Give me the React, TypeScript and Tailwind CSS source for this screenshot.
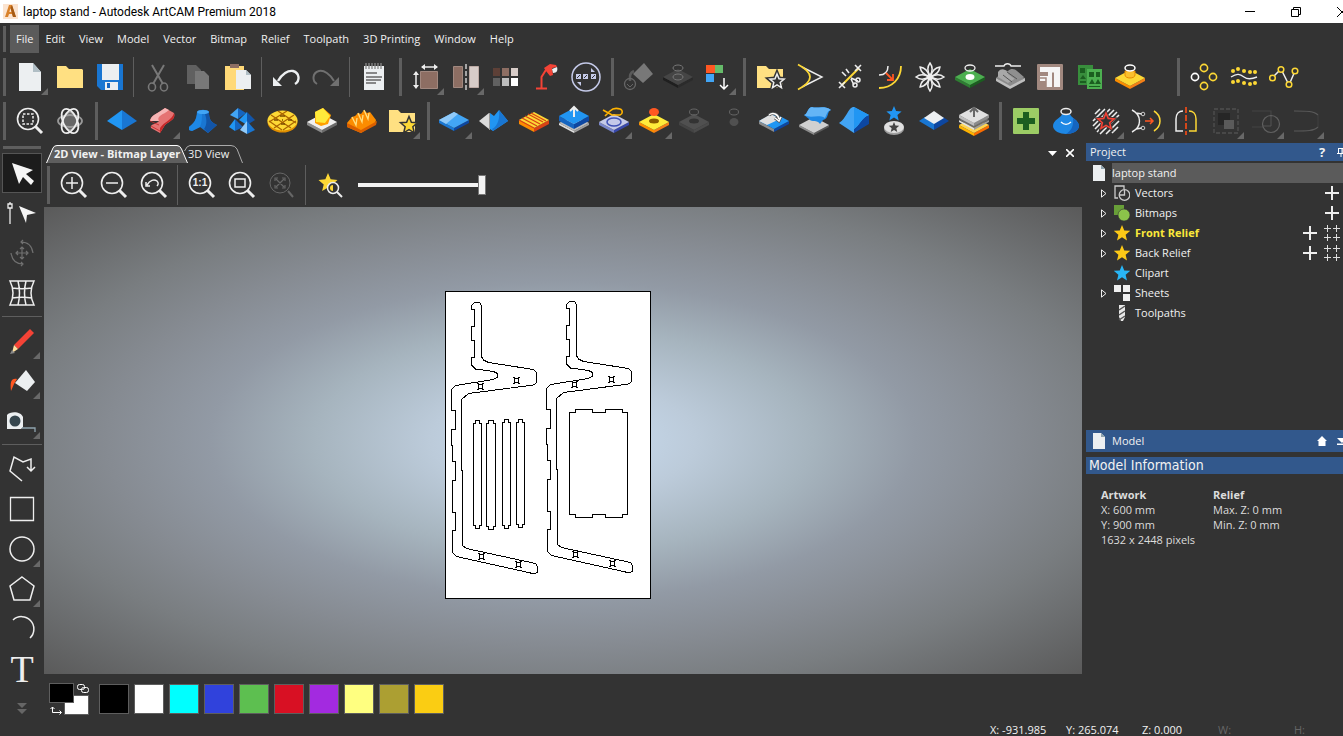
import { ReactNode } from "react";

type Tool = {
	name: string;
	art: ReactNode;
	menu?: boolean;
	active?: boolean;
};

type SlabProps = {
	top: string;
	left: string;
	right: string;
	y?: number;
	depth?: number;
};

type StarProps = {
	x: number;
	y: number;
	r: number;
	fill: string;
	stroke?: string;
	strokeWidth?: number;
};

const Svg = ({ children }: { children: ReactNode }) => (
	<svg className="size-10" viewBox="0 0 40 40" fill="none" aria-hidden="true">
		{children}
	</svg>
);

// isometric plate used by most of the relief icons
const Slab = ({ top, left, right, y = 20, depth = 3 }: SlabProps) => (
	<g>
		<path d={`M5 ${y}l15 8v${depth}l-15 -8z`} fill={left} />
		<path d={`M35 ${y}l-15 8v${depth}l15 -8z`} fill={right} />
		<path d={`M5 ${y}L20 ${y - 8}L35 ${y}L20 ${y + 8}z`} fill={top} />
	</g>
);

const Star = ({ x, y, r, ...rest }: StarProps) => {
	const points = Array.from({ length: 10 }, (_, i) => {
		const radius = i % 2 === 0 ? r : r * 0.45;
		const angle = (Math.PI / 5) * i - Math.PI / 2;
		return `${(x + radius * Math.cos(angle)).toFixed(2)},${(y + radius * Math.sin(angle)).toFixed(2)}`;
	});
	return <polygon points={points.join(" ")} {...rest} />;
};

const Lens = ({ children }: { children: ReactNode }) => (
	<g stroke="#eeeeee">
		<circle cx="18" cy="18" r="10.5" strokeWidth="1.6" />
		<path d="M25.5 25.5L32 32" strokeWidth="3" />
		{children}
	</g>
);

const Handle = ({ first = false }: { first?: boolean }) => (
	<div className={first ? "ml-[3px] mr-1 h-[38px] w-[3px] shrink-0 bg-[#5e5e5e]" : "ml-[5px] mr-1 h-[38px] w-[3px] shrink-0 bg-[#5e5e5e]"} />
);

const Divider = () => <div className="ml-[3px] mr-1 h-10 w-px shrink-0 bg-[#5e5e5e]" />;

const ToolButton = ({ tool }: { tool: Tool }) => (
	<button
		type="button"
		title={tool.name}
		aria-label={tool.name}
		className={tool.active ? "size-10 shrink-0 bg-[#1c1c1c] outline outline-1 -outline-offset-1 outline-[#555555]" : "size-10 shrink-0"}
	>
		<Svg>
			{tool.art}
			{tool.menu && <path d="M38 31v7h-7z" fill="#686868" />}
		</Svg>
	</button>
);

const Tools = ({ tools }: { tools: Tool[] }) => (
	<>
		{tools.map((tool) => (
			<ToolButton key={tool.name} tool={tool} />
		))}
	</>
);

const fileTools: Tool[] = [
	{
		name: "New model",
		menu: true,
		art: (
			<>
				<path d="M9 6h14l8 9v19H9z" fill="#eceff1" />
				<path d="M23 6l8 9h-8z" fill="#b0bec5" />
			</>
		),
	},
	{ name: "Open", art: <path d="M7 9h9l3 3h13l1 1v18H7z" fill="#ffe082" /> },
	{
		name: "Save",
		art: (
			<>
				<path d="M7 7h26v26H11l-4-4z" fill="#1976d2" />
				<path d="M12 7h17v16H12zM15 25h13v8H15z" fill="#eceff1" />
				<path d="M17 26h3v5h-3z" fill="#1565c0" />
			</>
		),
	},
];

const editTools: Tool[] = [
	{
		name: "Cut",
		art: (
			<g stroke="#787878" strokeWidth="1.6">
				<path d="M14 8l11 19M26 8L15 27" strokeWidth="2" />
				<ellipse cx="14" cy="30" rx="3.5" ry="4" />
				<ellipse cx="26" cy="30" rx="3.5" ry="4" />
			</g>
		),
	},
	{
		name: "Copy",
		art: (
			<>
				<path d="M9 8h9l5 5v14H9z" fill="#606060" />
				<path d="M17 14h9l5 5v13H17z" fill="#787878" />
			</>
		),
	},
	{
		name: "Paste",
		art: (
			<>
				<path d="M7 9h19v24H7z" fill="#ffd978" />
				<path d="M12 7h9v4h-9z" fill="#8d6e63" />
				<path d="M18 13h10l5 5v14H18z" fill="#eceff1" />
				<path d="M28 13l5 5h-5z" fill="#b0bec5" />
			</>
		),
	},
];

const undoPath = "M12 24C16 17 22 13 27 14C34 16 34 24 29 27";

const historyTools: Tool[] = [
	{
		name: "Undo",
		art: (
			<>
				<path d={undoPath} stroke="#eceff1" strokeWidth="2.4" />
				<path d="M7 20v9h9z" fill="#eceff1" />
			</>
		),
	},
	{
		name: "Redo",
		art: (
			<g transform="matrix(-1 0 0 1 40 0)">
				<path d={undoPath} stroke="#707070" strokeWidth="2" />
				<path d="M7 20v9h9z" fill="#707070" />
			</g>
		),
	},
];

const noteTools: Tool[] = [
	{
		name: "Notes",
		art: (
			<>
				<path d="M10 9h20v24H10z" fill="#eceff1" />
				<path d="M12 6v6M15 6v6M18 6v6M21 6v6M24 6v6M27 6v6" stroke="#8a8a8a" strokeWidth="1.3" />
				<path d="M12 16h11M12 20h16M12 23h15M12 26h10" stroke="#666" strokeWidth="1.3" />
			</>
		),
	},
];

const modelTools: Tool[] = [
	{
		name: "Set size",
		menu: true,
		art: (
			<>
				<path d="M14.5 14.5h17v17h-17z" fill="#8d6e63" stroke="#a1887f" />
				<path d="M16 10h15M10 15v15" stroke="#eee" strokeWidth="1.5" />
				<path d="M15 10l4-3v6zM32 10l-4-3v6zM10 14l-3 4h6zM10 32l-3-4h6z" fill="#eee" />
			</>
		),
	},
	{
		name: "Mirror model",
		menu: true,
		art: (
			<>
				<path d="M7.5 9.5h9v21h-9z" fill="#8d6e63" stroke="#a1887f" />
				<path d="M23.5 9.5h9v21h-9z" fill="#d7ccc8" stroke="#bcaaa4" />
				<path d="M20 7v26" stroke="#ccc" strokeWidth="1.5" strokeDasharray="5 2" />
			</>
		),
	},
	{
		name: "Grey scale",
		art: (
			<>
				<path d="M7 11h7v8H7z" fill="#5d4037" />
				<path d="M16 11h7v8h-7z" fill="#8d6e63" />
				<path d="M25 11h7v8h-7z" fill="#d7ccc8" />
				<path d="M7 21h7v8H7z" fill="#616161" />
				<path d="M16 21h7v8h-7z" fill="#bdbdbd" />
				<path d="M25 21h7v8h-7z" fill="#fff" />
			</>
		),
	},
	{
		name: "Lights",
		art: (
			<>
				<path d="M10 31.5h11M15.5 32V20l5-8" stroke="#f44336" strokeWidth="2" />
				<path d="M18 11l6-4 6 1 1 2-5 1 1 7-3 1-4-5z" fill="#f44336" />
				<path d="M26 12l5-2c1 3 0 6-4 6z" fill="#eceff1" />
			</>
		),
	},
	{
		name: "Preview",
		art: (
			<>
				<circle cx="20" cy="20" r="14" stroke="#c5cae9" strokeWidth="1.5" />
				<path d="M10 17h5v5h-5zM17 17h5v5h-5zM25 17h5v5h-5zM25 11v4h4zM11 25h4v4z" fill="#c5cae9" />
				<path d="M11 21l3-3M18 21l3-3M26 21l3-3" stroke="#333" />
			</>
		),
	},
];

const fillTools: Tool[] = [
	{
		name: "Fill",
		art: (
			<>
				<path d="M26 6l9 11-10 9-10-9z" fill="#787878" />
				<path d="M16 14c-5 2-4 6-4 10" stroke="#5a5a5a" strokeWidth="2.5" />
				<circle cx="12" cy="27" r="5.5" stroke="#666" strokeWidth="1.3" />
				<path d="M9 27l3 3 3-3" stroke="#666" />
			</>
		),
	},
	{
		name: "Offset ring",
		art: (
			<>
				<Slab top="#454545" left="#1f1f1f" right="#2b2b2b" />
				<ellipse cx="20" cy="20" rx="5" ry="3" stroke="#777" />
				<ellipse cx="20" cy="11" rx="5" ry="3" stroke="#777" />
			</>
		),
	},
	{
		name: "Link colours",
		menu: true,
		art: (
			<>
				<path d="M8 8h9v8H8z" fill="#ff5722" />
				<path d="M17 8h8v8h-8z" fill="#66bb6a" />
				<path d="M8 17h8v8H8z" fill="#42a5f5" />
				<path d="M26 21v11M22 28l4 4 4-4" stroke="#fff" strokeWidth="1.5" />
			</>
		),
	},
];

const vectorTools: Tool[] = [
	{
		name: "Vector library",
		art: (
			<>
				<path d="M7 9h9l3 3h14v19H7z" fill="#ffe082" />
				<Star x={27} y={24.5} r={8} fill="#333" stroke="#333" strokeWidth={4} />
				<Star x={27} y={24.5} r={7.5} fill="#333" stroke="#eee" strokeWidth={1.5} />
			</>
		),
	},
	{
		name: "Fillet corner",
		art: (
			<>
				<path d="M12 10l20 10-20 10" stroke="#eee" strokeWidth="1.4" />
				<path d="M8 7.5C24 16 24 24 8 32.5" stroke="#fdd835" strokeWidth="1.8" />
			</>
		),
	},
	{
		name: "Trim vectors",
		art: (
			<>
				<path d="M12 28l17-17" stroke="#fdd835" strokeWidth="2" />
				<path d="M9 25l6 6M15 25l-6 6M25 8l6 6M31 8l-6 6M12 15l4 4M16 12l3 4M21 21l7 3M21 22l3 6" stroke="#eee" strokeWidth="1.6" />
				<circle cx="28" cy="23" r="2" stroke="#eee" strokeWidth="1.5" />
				<circle cx="25" cy="28" r="2" stroke="#eee" strokeWidth="1.5" />
			</>
		),
	},
	{
		name: "Extend vector",
		art: (
			<>
				<path d="M18 9c0 6-3 9-9 9" stroke="#eee" strokeWidth="1.5" />
				<path d="M31 9c0 13-9 22-22 22" stroke="#fdd835" strokeWidth="1.8" />
				<path d="M16 16l6.5 6.5M23 17v6h-6" stroke="#ff5722" strokeWidth="1.8" />
			</>
		),
	},
	{
		name: "Rotate copy",
		art: (
			<g stroke="#eee" strokeWidth="1.5">
				{[0, 45, 90, 135, 180, 225, 270, 315].map((angle) => (
					<path key={angle} d="M20 19C17 14 17 10 20 6C23 10 23 14 20 19z" transform={`rotate(${angle} 20 20)`} />
				))}
			</g>
		),
	},
	{
		name: "Vector on relief",
		art: (
			<>
				<Slab top="#4caf50" left="#2e7d32" right="#1b5e20" />
				<ellipse cx="20" cy="20" rx="4.5" ry="3" fill="#fff" />
				<ellipse cx="20" cy="11" rx="5" ry="3" stroke="#eee" strokeWidth="1.3" />
			</>
		),
	},
	{
		name: "Unwrap",
		art: (
			<>
				<path d="M6 21l9-8 20 8-15 9z" fill="#8a8a8a" />
				<path d="M6 21l14 8v3L6 24zM35 21l-15 8v3l15-8z" fill="#bdbdbd" />
				<path d="M8 15c3-4 7-3 9 0l9 6-8 5-10-6z" fill="#a8a8a8" />
				<path d="M18 14c3-3 7-2 9 0l7 6-8 3-8-6z" fill="#8f8f8f" />
				<path d="M17 15l10 7M13 18l9 7" stroke="#555" />
				<path d="M5 9h9c1-3 6-3 7 0h10" stroke="#eee" strokeWidth="1.3" />
			</>
		),
	},
	{
		name: "Nesting",
		art: (
			<>
				<rect x="7" y="7" width="26" height="26" rx="1" fill="#a1887f" />
				<path d="M10 10h20v20h-6V15.500h-2v14.500h-6v-6h-6v-5h8v-4h-8z" fill="#f5f5f5" />
				<path d="M10 21h6v9" stroke="#a1887f" strokeWidth="1.5" />
			</>
		),
	},
	{
		name: "Block copy",
		art: (
			<>
				<path d="M8 8h15v20H8z" fill="#388e3c" />
				<path d="M17 12h15v20H17z" fill="#4caf50" />
				<path d="M10 11h5v5h-5zM10 24h6v2h-6zM19 15h5v5h-5zM26 15h4v5h-4zM19 27l3-5 3 5zM25 27l3-5 3 5zM19 29h11v1H19zM10 22l3-4 3 4z" fill="#1b5e20" />
			</>
		),
	},
	{
		name: "Project vector",
		art: (
			<>
				<Slab top="#fdd835" left="#fb8c00" right="#f57f17" y={21} />
				<path d="M15 14v4c0 4 10 4 10 0v-4z" fill="#fbc02d" stroke="#e68a00" />
				<ellipse cx="20" cy="11" rx="5" ry="3" stroke="#fff" strokeWidth="1.5" fill="#333" />
			</>
		),
	},
];

const nodeTools: Tool[] = [
	{
		name: "Smooth nodes",
		art: (
			<g strokeWidth="1.6">
				<circle cx="11" cy="20" r="3.6" stroke="#fff" />
				<circle cx="20" cy="11" r="3.6" stroke="#fdd835" />
				<circle cx="29" cy="20" r="3.6" stroke="#fdd835" />
				<circle cx="20" cy="29" r="3.6" stroke="#fdd835" />
			</g>
		),
	},
	{
		name: "Fit arcs",
		art: (
			<>
				<path d="M7 20c6-4 9-3 13 0s8 2 13 0" stroke="#eee" strokeWidth="1.4" />
				<g fill="#fdd835">
					{[[9, 14], [14, 12], [20, 14], [26, 15], [31, 15], [9, 25], [14, 24], [20, 26], [26, 27], [31, 26]].map(([x, y]) => (
						<circle key={`${x}-${y}`} cx={x} cy={y} r="2" />
					))}
				</g>
			</>
		),
	},
	{
		name: "Polyline nodes",
		art: (
			<>
				<path d="M8 21l9-9 8 16 6-14" stroke="#eee" strokeWidth="1.5" />
				<g stroke="#fdd835" strokeWidth="1.5" fill="#333">
					<circle cx="8.5" cy="21" r="2.8" />
					<circle cx="17" cy="12.5" r="2.8" />
					<circle cx="25" cy="27.5" r="2.8" />
					<circle cx="31" cy="14" r="2.8" />
				</g>
			</>
		),
	},
];

const viewTools: Tool[] = [
	{
		name: "Zoom to selection",
		art: (
			<Lens>
				<path d="M13 13h10v10H13z" strokeWidth="1.5" strokeDasharray="2.5 1.5" />
			</Lens>
		),
	},
	{
		name: "Orbit",
		art: (
			<>
				<path d="M20 11l7 5v9l-7 4-7-4v-9z" fill="#666" stroke="#999" />
				<g strokeWidth="1.8">
					<ellipse cx="20" cy="20" rx="12" ry="6" stroke="#999" />
					<ellipse cx="20" cy="20" rx="13" ry="7" transform="rotate(65 20 20)" stroke="#eee" />
					<ellipse cx="20" cy="20" rx="13" ry="7" transform="rotate(-65 20 20)" stroke="#eee" />
				</g>
			</>
		),
	},
];

const reliefTools: Tool[] = [
	{
		name: "Shape editor",
		art: (
			<>
				<path d="M5 20L20 9v20z" fill="#2196f3" />
				<path d="M35 20L20 9v20z" fill="#1976d2" />
			</>
		),
	},
	{
		name: "Two rail sweep",
		menu: true,
		art: (
			<>
				<path d="M8 20C9 14 15 13 23 7l9 5c2 6-4 8-9 12l-5 8-9-5c-2-4 6-4 8-7z" fill="#e57373" />
				<path d="M8 20C9 14 15 13 23 7l4 2c-6 5-13 6-10 11z" fill="#f6b5b5" />
				<path d="M32 12c2 6-4 8-9 12l-5 8v-5c4-6 12-8 14-15z" fill="#c62828" />
				<path d="M9 25l9 5M8 20l9 4" stroke="#c62828" strokeWidth=".8" />
			</>
		),
	},
	{
		name: "Extrude",
		art: (
			<>
				<path d="M15 11C15 19 11 23 7 26v3l3 1 8-4 8 6 9-8c-7-3-8-7-8-13C25 8 17 8 15 11z" fill="#1976d2" />
				<path d="M15 11C15 19 11 23 7 26v3l3 1 8-4c2-5 2-9 2-14z" fill="#1e88e5" />
				<path d="M27 11c0 6 1 10 8 13l-9 8-4-4c3-4 3-9 1-15z" fill="#1255a8" />
				<ellipse cx="21" cy="11" rx="6" ry="2" fill="#42a5f5" />
			</>
		),
	},
	{
		name: "Spin",
		art: (
			<>
				<path d="M16 7l-8 7 8 4z" fill="#42a5f5" />
				<path d="M16 7l8 5-8 6z" fill="#1565c0" />
				<path d="M25 11l-8 8 8 5z" fill="#2196f3" />
				<path d="M25 11l8 8-8 5z" fill="#1255a8" />
				<path d="M13 18l-6 8 6 4z" fill="#2196f3" />
				<path d="M13 18l8 8-8 4z" fill="#1565c0" />
				<path d="M25 20l-7 9 7 4z" fill="#90caf9" />
				<path d="M25 20l8 9-8 4z" fill="#1976d2" />
			</>
		),
	},
	{
		name: "Weave wizard",
		art: (
			<>
				<ellipse cx="20.5" cy="21" rx="15" ry="10.5" fill="#e08e00" />
				<ellipse cx="20.5" cy="19.5" rx="15" ry="10" fill="#fdd835" />
				<path d="M9 14l20 13M16 10l18 12M7 20l13 9M32 14L12 27M25 10L7 21M34 20l-13 9" stroke="#a86200" strokeWidth="1.2" />
				<path d="M12 19h4M18 15h5M19 23h4M26 19h4M20 19h1" stroke="#7a4a00" strokeWidth="1.5" />
			</>
		),
	},
	{
		name: "Emboss wizard",
		art: (
			<>
				<Slab top="#f0f0f0" left="#8c8c8c" right="#6b6b6b" y={21} />
				<path d="M13 11l8-4 8 7-3 9-7 2-6-3z" fill="#ffa000" />
				<path d="M13 11l8-4 7 8-5 7-9-1z" fill="#ffeb3b" />
			</>
		),
	},
	{
		name: "Texture relief",
		art: (
			<>
				<path d="M5 22l5-6 3-1 3-3 3 1 3-4 3 3 3-1 6 8-1 4-14 9L5 26z" fill="#fb8c00" />
				<path d="M35 20l-16 9v3l15-8zM5 22l14 7v3L5 26z" fill="#d95f00" />
				<path d="M10 16l4 8 1-7M16 12l4 9 1-7M22 9l4 9 1-6" stroke="#ffe082" strokeWidth="1.3" />
			</>
		),
	},
	{
		name: "Relief library",
		menu: true,
		art: (
			<>
				<path d="M7 9h9l3 3h14v19H7z" fill="#ffe082" />
				<Star x={27} y={24.5} r={9} fill="#fdd835" stroke="#333" strokeWidth={1.5} />
			</>
		),
	},
];

const sculptTools: Tool[] = [
	{
		name: "Smooth relief",
		menu: true,
		art: (
			<>
				<Slab top="#42a5f5" left="#1976d2" right="#0d47a1" y={19} />
				<path d="M5 19l15-8 4 2-12 10z" fill="#90caf9" />
			</>
		),
	},
	{
		name: "Scale relief",
		art: (
			<>
				<path d="M5 20l10-8v16z" fill="#dcdcdc" />
				<path d="M16 12l4 3 5-6 9 11-15 10-3-2z" fill="#2196f3" />
				<path d="M25 9l9 11-15 10-1-2c6-3 8-11 7-19z" fill="#1976d2" />
				<path d="M15.5 12v17" stroke="#999" />
			</>
		),
	},
	{
		name: "Weave relief",
		art: (
			<>
				<Slab top="#fdd835" left="#fb8c00" right="#d84315" y={19} depth={4} />
				<path d="M8 17l15 8M11 15l15 8M14 13l15 8M17 12l15 8M5 19l15 8" stroke="#d84315" strokeWidth="1.3" />
			</>
		),
	},
	{
		name: "Offset relief",
		art: (
			<>
				<Slab top="#bdbdbd" left="#e0e0e0" right="#9e9e9e" y={22} depth={2} />
				<Slab top="#2196f3" left="#1565c0" right="#0d47a1" y={15} depth={5} />
				<path d="M20 16V7M16 10l4-4 4 4" stroke="#eee" strokeWidth="2" />
			</>
		),
	},
	{
		name: "Add draft",
		menu: true,
		art: (
			<>
				<Slab top="#c5cae9" left="#7986cb" right="#3949ab" y={21} />
				<ellipse cx="20" cy="21" rx="7" ry="4" stroke="#3f51b5" strokeWidth="1.5" />
				<path d="M9 9l9 5h8c3-1 3-5 0-6s-7-1-10 2l-5 5" stroke="#ffb300" strokeWidth="1.6" />
			</>
		),
	},
	{
		name: "Paste along curve",
		menu: true,
		art: (
			<>
				<Slab top="#ffeb3b" left="#fb8c00" right="#f57f17" y={21} />
				<ellipse cx="20" cy="20" rx="5" ry="2.5" fill="#8a5a00" />
				<ellipse cx="20" cy="11" rx="5" ry="4" fill="#ff5722" />
			</>
		),
	},
	{
		name: "Cut relief",
		art: (
			<>
				<Slab top="#505050" left="#444" right="#4b4b4b" y={21} />
				<ellipse cx="20" cy="20" rx="5" ry="2.5" fill="#333" />
				<ellipse cx="20" cy="11" rx="4.5" ry="3" stroke="#666" />
			</>
		),
	},
	{
		name: "Keep relief",
		art: (
			<>
				<ellipse cx="20" cy="11" rx="4.5" ry="3" stroke="#666" />
				<ellipse cx="20" cy="21" rx="4.5" ry="4" fill="#505050" />
			</>
		),
	},
	{
		name: "Mirror relief",
		art: (
			<>
				<Slab top="#2196f3" left="#8c8c8c" right="#0d47a1" y={20} />
				<path d="M5 20l12-7 9 5-13 6z" fill="#e0e0e0" />
				<path d="M15 14c4-3 9-1 10 4M21 17l4 3 2-4" stroke="#555" strokeWidth="3" />
				<path d="M15 14c4-3 9-1 10 4M21 17l4 3 2-4" stroke="#fff" strokeWidth="1.5" />
			</>
		),
	},
	{
		name: "Wrap relief",
		art: (
			<>
				<Slab top="#d0d0d0" left="#8c8c8c" right="#5a5a5a" y={24} depth={2} />
				<path d="M10 14C14 13 13 7 18 6c5 2 12-2 19 3-4 1-2 9-8 10l-3 4c-3-5-8-1-11-5z" fill="#1e88e5" />
				<path d="M10 14C14 13 13 7 18 6c5 2 12-2 19 3-4 1-4 4-6 8-7-4-14 1-21-3z" fill="#64b5f6" />
			</>
		),
	},
	{
		name: "Fade relief",
		art: (
			<>
				<path d="M5 22C13 17 14 6 20 6l15 8-15 18z" fill="#42a5f5" />
				<path d="M35 14v9L20 32v-4c6-4 8-12 15-14z" fill="#0d47a1" />
				<path d="M20 6l15 8c-7 2-9 10-15 14z" fill="#2196f3" />
			</>
		),
	},
	{
		name: "Star relief",
		art: (
			<>
				<ellipse cx="20" cy="28" rx="10" ry="6" fill="#9e9e9e" />
				<ellipse cx="20" cy="26" rx="10" ry="6" fill="#e0e0e0" />
				<Star x={20} y={26.5} r={5.5} fill="#444" />
				<Star x={20} y={13} r={8} fill="#2196f3" />
			</>
		),
	},
	{
		name: "Envelope",
		art: (
			<>
				<path d="M5 20l6-4 9 5v8z" fill="#1976d2" />
				<path d="M35 20l-6-4-9 5v8z" fill="#0d47a1" />
				<path d="M10 17l10-7 10 7-10 6z" fill="#eceff1" />
			</>
		),
	},
	{
		name: "Merge layers",
		art: (
			<>
				<Slab top="#ffd54f" left="#ffb300" right="#fb6d00" y={24} />
				<Slab top="#6c6c6c" left="#e0e0e0" right="#9e9e9e" y={19} depth={2} />
				<Slab top="#e0e0e0" left="#bdbdbd" right="#8c8c8c" y={14} />
				<path d="M20 16V8M16 11l4-4 4 4" stroke="#666" strokeWidth="2" />
			</>
		),
	},
];

const extraTools: Tool[] = [
	{
		name: "Add",
		art: (
			<>
				<rect x="7" y="7" width="26" height="26" rx="1" fill="#9ccc65" />
				<path d="M17 11h6v6h6v6h-6v6h-6v-6h-6v-6h6z" fill="#1b5e20" />
			</>
		),
	},
	{
		name: "Inflate",
		art: (
			<>
				<path d="M16 13h8c1 4 9 6 9 12 0 5-7 8-13 8S7 30 7 25c0-6 8-8 9-12z" fill="#1e88e5" />
				<path d="M20 33c6 0 13-3 13-8 0-3-3-6-6-8 1 8-2 13-7 16z" fill="#1565c0" />
				<path d="M15 21c3 3 7 3 10 0" stroke="#fff" strokeWidth="1.3" />
				<ellipse cx="20" cy="10.5" rx="5" ry="3" stroke="#eee" strokeWidth="1.5" fill="#333" />
			</>
		),
	},
	{
		name: "Hatch",
		menu: true,
		art: (
			<>
				<path d="M9 13l5-5M7 20L19 8M7 25L24 8M9 28L28 9M11 31L31 11M14 33l19-19M20 33l13-13M26 32l6-6" stroke="#eee" strokeWidth="1.6" />
				<Star x={20} y={20.5} r={10} fill="#333" stroke="#333" strokeWidth={2} />
				<Star x={20} y={20.5} r={8.5} fill="#333" stroke="#f44336" strokeWidth={1.6} />
			</>
		),
	},
	{
		name: "Convert arcs",
		menu: true,
		art: (
			<>
				<path d="M6 9c10 5 10 17 0 22M10 12l6 1M10 28l6-1" stroke="#eee" strokeWidth="1.4" />
				<circle cx="17" cy="13" r="1.8" stroke="#ccc" />
				<circle cx="17" cy="27" r="1.8" stroke="#ccc" />
				<path d="M19 20h8M24 17l3 3-3 3" stroke="#ff5722" strokeWidth="1.5" />
				<path d="M28 10c8 5 8 15 0 20" stroke="#fdd835" strokeWidth="1.5" />
			</>
		),
	},
	{
		name: "Mirror vectors",
		art: (
			<>
				<path d="M17 10c-4 0-7 3-7 8v12h7" stroke="#eee" strokeWidth="1.5" />
				<path d="M23 10c4 0 7 3 7 8v12h-7" stroke="#fdd835" strokeWidth="1.5" />
				<path d="M20 6v28" stroke="#e64a19" strokeWidth="1.8" strokeDasharray="6 2" />
			</>
		),
	},
	{
		name: "Group",
		menu: true,
		art: (
			<>
				<path d="M8 8h24v24H8z" stroke="#484848" strokeWidth="1.8" strokeDasharray="4 2" />
				<path d="M12 12h12v12H12z" fill="#262626" />
				<path d="M18 19h10v9H18z" fill="#5a5a5a" />
			</>
		),
	},
	{
		name: "Merge vectors",
		menu: true,
		art: (
			<>
				<path d="M6 10h19v6M6 26h12" stroke="#444" strokeWidth="1.2" />
				<circle cx="25" cy="23" r="8.5" stroke="#606060" strokeWidth="1.2" />
				<path d="M25 15v10h-8" stroke="#555" />
			</>
		),
	},
	{
		name: "Join vectors",
		menu: true,
		art: (
			<>
				<path d="M8 10c13 0 20 0 24 4M8 30c13 0 20 0 24-4" stroke="#5a5a5a" strokeWidth="1.2" />
				<path d="M32 14v12" stroke="#404040" />
			</>
		),
	},
];

const zoomTools: Tool[] = [
	{
		name: "Zoom in",
		art: (
			<Lens>
				<path d="M12 18h12M18 12v12" strokeWidth="1.5" />
			</Lens>
		),
	},
	{
		name: "Zoom out",
		art: (
			<Lens>
				<path d="M12 18h12" strokeWidth="1.5" />
			</Lens>
		),
	},
	{
		name: "Zoom previous",
		art: (
			<Lens>
				<path d="M13 20c3-5 7-6 10-4 2 2 1 4 0 5M12 17v4h4" strokeWidth="1.5" />
			</Lens>
		),
	},
];

const fitTools: Tool[] = [
	{
		name: "Zoom 1:1",
		art: (
			<Lens>
				<text x="18" y="21" textAnchor="middle" fontSize="10" fontWeight="700" fontFamily="Liberation Sans" stroke="none" fill="#eee">
					1:1
				</text>
			</Lens>
		),
	},
	{
		name: "Zoom to fit",
		art: (
			<Lens>
				<path d="M13 14h10v8H13z" strokeWidth="1.5" />
			</Lens>
		),
	},
	{
		name: "Zoom to objects",
		art: (
			<g stroke="#666">
				<circle cx="18" cy="18" r="10" />
				<path d="M26 26l5 6" strokeWidth="2" />
				<path d="M14 14l8 8M22 14l-8 8M13 16v-3h3M20 13h3v3M23 20v3h-3M16 23h-3v-3" strokeWidth="1.2" />
			</g>
		),
	},
];

const previewTools: Tool[] = [
	{
		name: "Preview relief layer",
		art: (
			<>
				<Star x={18} y={18} r={10} fill="#fdd835" />
				<circle cx="23" cy="23" r="5.5" stroke="#eee" strokeWidth="1.5" fill="#333" />
				<path d="M23 20v6c-2 0-3-1-3-3s1-3 3-3z" fill="#fdd835" />
				<path d="M27 27l5 5" stroke="#eee" strokeWidth="2" />
			</>
		),
	},
];

const selectTools: Tool[] = [
	{ name: "Select vectors", active: true, art: <path d="M10 10l21 7-7 4 8 7-3 4-8-8-4 7z" fill="#f5f5f5" /> },
	{
		name: "Node editing",
		art: (
			<>
				<path d="M17 13l17 7-9 2-1 8z" fill="#f5f5f5" />
				<path d="M8 9v22" stroke="#aaa" strokeWidth="2" />
				<path d="M6 11h4v4H6z" fill="#333" stroke="#eee" strokeWidth="1.3" />
			</>
		),
	},
	{
		name: "Transform vectors",
		art: (
			<g stroke="#707070" strokeWidth="1.2">
				<path d="M20 15v10M15 20h10M18 16l2-2 2 2M18 24l2 2 2-2M16 18l-2 2 2 2M24 18l2 2-2 2" />
				<path d="M19 9c7 0 11 4 12 11M21 31c-7 0-11-4-12-11M21 7l-2 2 2 2M19 33l2-2-2-2" />
			</g>
		),
	},
	{
		name: "Envelope distortion",
		art: (
			<path
				d="M8 8h24c-4 8-4 16 0 24H8c4-8 4-16 0-24zM10 15c7 1 13 1 20 0M10 25c7-1 13-1 20 0M16 8c2 8 2 16 0 24M24 8c-2 8-2 16 0 24"
				stroke="#eee"
				strokeWidth="1.5"
			/>
		),
	},
];

const paintTools: Tool[] = [
	{
		name: "Draw",
		menu: true,
		art: (
			<>
				<path d="M12 24L28 8l4 4-16 16z" fill="#f44336" />
				<path d="M12 24l4 4-6 4z" fill="#ffe0a0" />
				<path d="M8 33l2-4 3 3z" fill="#888" />
			</>
		),
	},
	{
		name: "Flood fill",
		menu: true,
		art: (
			<>
				<path d="M9 30c-1-9 0-13 6-12l-3 5z" fill="#ff5722" />
				<path d="M24 9l9 12-8 9-12-8z" fill="#eceff1" />
			</>
		),
	},
	{
		name: "Measure",
		menu: true,
		art: (
			<>
				<path d="M5 14c3-4 14-4 16 2v10l-2 2H5z" fill="#eceff1" />
				<circle cx="13" cy="20" r="5.5" fill="#37474f" />
				<path d="M20 27h13v4" stroke="#90a4ae" strokeWidth="1.3" />
			</>
		),
	},
];

const shapeTools: Tool[] = [
	{ name: "Polyline", art: <path d="M20 32L8 22l4-14 9 5 8-3v12M25 18l4 4 4-4" stroke="#eee" strokeWidth="1.5" /> },
	{ name: "Rectangle", art: <path d="M8.5 8.5h23v23h-23z" stroke="#eee" strokeWidth="1.3" /> },
	{ name: "Circle", menu: true, art: <circle cx="20" cy="20" r="12" stroke="#eee" strokeWidth="1.5" /> },
	{ name: "Polygon", menu: true, art: <path d="M20 8l12 9-4 14H12L8 17z" stroke="#eee" strokeWidth="1.5" /> },
	{ name: "Arc", art: <path d="M11 11a12 12 0 0 1 17 18" stroke="#eee" strokeWidth="1.5" /> },
	{
		name: "Text",
		art: (
			<text x="20" y="33" textAnchor="middle" fontSize="38" fontFamily="Liberation Serif" fill="#eee">
				T
			</text>
		),
	},
];

const menus = ["File", "Edit", "View", "Model", "Vector", "Bitmap", "Relief", "Toolpath", "3D Printing", "Window", "Help"];

const swatches = [
	{ name: "Black", color: "bg-black" },
	{ name: "White", color: "bg-white" },
	{ name: "Cyan", color: "bg-[#00ffff]" },
	{ name: "Blue", color: "bg-[#3042dc]" },
	{ name: "Green", color: "bg-[#5dbf50]" },
	{ name: "Red", color: "bg-[#d81023]" },
	{ name: "Purple", color: "bg-[#a32ae0]" },
	{ name: "Light yellow", color: "bg-[#ffff80]" },
	{ name: "Olive", color: "bg-[#ac9f32]" },
	{ name: "Amber", color: "bg-[#facd13]" },
];

const PageIcon = () => (
	<svg className="h-4 w-3" viewBox="0 0 12 16" aria-hidden="true">
		<path d="M0 0h8l4 4v12H0z" fill="#eceff1" />
		<path d="M8 0l4 4H8z" fill="#90a4ae" />
	</svg>
);

const treeIcons = {
	vectors: (
		<g fill="none" stroke="#ccc" strokeWidth="1.3">
			<path d="M10 4V1H1v12h3" />
			<circle cx="10.5" cy="10" r="5.3" />
			<path d="M10.5 5v5H6" />
		</g>
	),
	bitmaps: (
		<>
			<path d="M0 0h10v10H0z" fill="#689f38" />
			<circle cx="10" cy="10" r="6" fill="#8bc34a" stroke="#333" strokeWidth=".6" />
		</>
	),
	yellow: <Star x={8} y={8.5} r={8.5} fill="#fcc917" />,
	blue: <Star x={8} y={8.5} r={8.5} fill="#29b6f6" />,
	sheets: <path d="M0 0h7v7H0zM9 0h7v7H9zM9 9h7v7H9z" fill="#f0f0f0" />,
	toolpaths: (
		<>
			<path d="M5 0h6v12l-2 4H7l-2-4z" fill="#e8e8e8" />
			<path d="M5 5l6-4M5 10l6-4M5 15l6-4" stroke="#555" strokeWidth="1.5" />
		</>
	),
};

const treeRows: { label: string; icon: ReactNode; open?: boolean; add?: boolean; grid?: boolean; current?: boolean }[] = [
	{ label: "Vectors", icon: treeIcons.vectors, open: true, add: true },
	{ label: "Bitmaps", icon: treeIcons.bitmaps, open: true, add: true },
	{ label: "Front Relief", icon: treeIcons.yellow, open: true, add: true, grid: true, current: true },
	{ label: "Back Relief", icon: treeIcons.yellow, open: true, add: true, grid: true },
	{ label: "Clipart", icon: treeIcons.blue },
	{ label: "Sheets", icon: treeIcons.sheets, open: true },
	{ label: "Toolpaths", icon: treeIcons.toolpaths },
];

const TitleBar = () => (
	<header className="flex h-[23px] shrink-0 items-center overflow-hidden bg-white pl-[3px] text-xs text-black">
		<svg className="mr-[5px] size-[15px]" viewBox="0 0 15 15" aria-hidden="true">
			<path d="M0 0h15v15H0z" fill="#fbe3cf" />
			<path d="M2 13L6 1h3l4 12h-3l-1-3H6l-1 3z" fill="#d9822b" />
			<path d="M7.5 4L6.3 8h2.4z" fill="#fbe3cf" />
			<path d="M9 1l4 12h-3L7.5 4z" fill="#a65a14" />
		</svg>
		<h1 className="font-[Roboto,sans-serif]">laptop stand - Autodesk ArtCAM Premium 2018</h1>
		<div className="-mr-[22px] ml-auto flex">
			<button type="button" aria-label="Minimize" className="flex h-[23px] w-[46px] items-center justify-center">
				<span className="h-px w-2.5 bg-black" />
			</button>
			<button type="button" aria-label="Restore" className="flex h-[23px] w-[46px] items-center justify-center">
				<svg className="size-2.5" viewBox="0 0 10 10" fill="none" stroke="#000" aria-hidden="true">
					<path d="M.5 2.5h7v7h-7zM2.5 2.5v-2h7v7h-2" />
				</svg>
			</button>
			<button type="button" aria-label="Close" className="flex h-[23px] w-[46px] items-center justify-center">
				<svg className="size-2.5" viewBox="0 0 10 10" stroke="#000" aria-hidden="true">
					<path d="M0 0l10 10M10 0L0 10" />
				</svg>
			</button>
		</div>
	</header>
);

const MenuBar = () => (
	<nav className="flex h-8 shrink-0 items-center text-[11px]">
		<div className="ml-[3px] mr-1 h-[26px] w-[3px] bg-[#5e5e5e]" />
		{menus.map((menu, index) => (
			<button key={menu} type="button" className={index === 0 ? "-mr-px h-7 bg-[#5b5b5b] px-1.5" : "h-7 px-[7px]"}>
				{menu}
			</button>
		))}
	</nav>
);

const ToolBars = () => (
	<div className="shrink-0 overflow-hidden">
		<div className="flex h-11 items-center">
			<Handle first />
			<Tools tools={fileTools} />
			<Divider />
			<Tools tools={editTools} />
			<Divider />
			<Tools tools={historyTools} />
			<Divider />
			<Tools tools={noteTools} />
			<Handle />
			<Tools tools={modelTools} />
			<Handle />
			<Tools tools={fillTools} />
			<Handle />
			<Tools tools={vectorTools} />
			<div className="w-[22px] shrink-0" />
			<Handle />
			<Tools tools={nodeTools} />
		</div>
		<div className="flex h-11 items-center">
			<Handle first />
			<Tools tools={viewTools} />
			<Handle />
			<Tools tools={reliefTools} />
			<Handle />
			<Tools tools={sculptTools} />
			<Handle />
			<Tools tools={extraTools} />
		</div>
	</div>
);

const SideDivider = () => <div className="mb-1 mt-[3px] h-px w-10 shrink-0 bg-[#5e5e5e]" />;

const SideBar = () => (
	<aside className="flex w-11 shrink-0 flex-col items-center">
		<div className="mb-1 mt-[3px] h-[3px] w-[38px] shrink-0 bg-[#5e5e5e]" />
		<Tools tools={selectTools} />
		<SideDivider />
		<Tools tools={paintTools} />
		<SideDivider />
		<Tools tools={shapeTools} />
		<button type="button" aria-label="More tools" className="mt-3.5">
			<svg className="h-3 w-[10px]" viewBox="0 0 10 12" fill="#666" aria-hidden="true">
				<path d="M0 0h10L5 5zM0 6h10l-5 5z" />
			</svg>
		</button>
	</aside>
);

const Tabs = () => (
	<div className="flex h-5 shrink-0 items-end text-[11px]" role="tablist">
		<button type="button" role="tab" aria-selected="true" className="relative z-10 ml-0.5 h-[18px] w-[142px] font-bold">
			<svg className="absolute inset-0 h-full w-full" viewBox="0 0 142 18" preserveAspectRatio="none" aria-hidden="true">
				<path d="M.5 18L7 3Q8 .5 11 .5H131Q134 .5 135.5 4L141.5 18" fill="#5e5e5e" stroke="#fff" />
			</svg>
			<span className="relative block whitespace-nowrap pl-2 text-left leading-[18px]">2D View - Bitmap Layer</span>
		</button>
		<button type="button" role="tab" aria-selected="false" className="relative -ml-1 h-[18px] w-[59px]">
			<svg className="absolute inset-0 h-full w-full" viewBox="0 0 59 18" preserveAspectRatio="none" aria-hidden="true">
				<path d="M.5 6Q3 .5 6 .5H47Q51 .5 53 4L58.5 18" fill="#333" stroke="#aaa" />
			</svg>
			<span className="relative block whitespace-nowrap pl-1 text-left leading-[18px]">3D View</span>
		</button>
		<div className="ml-auto flex h-5 pr-[3px]">
			<button type="button" aria-label="Window list" className="flex w-[18px] items-center justify-center">
				<svg className="h-[5px] w-[9px]" viewBox="0 0 9 5" fill="#fff" aria-hidden="true">
					<path d="M0 0h9L4.5 5z" />
				</svg>
			</button>
			<button type="button" aria-label="Close view" className="flex w-[18px] items-center justify-center">
				<svg className="size-2" viewBox="0 0 8 8" stroke="#fff" strokeWidth="1.6" aria-hidden="true">
					<path d="M0 0l8 8M8 0L0 8" />
				</svg>
			</button>
		</div>
	</div>
);

const ViewBar = () => (
	<div className="flex h-11 shrink-0 items-center">
		<Handle first />
		<Tools tools={zoomTools} />
		<Divider />
		<Tools tools={fitTools} />
		<Divider />
		<Tools tools={previewTools} />
		<input
			type="range"
			aria-label="Bitmap contrast"
			defaultValue={100}
			className="ml-2 h-5 w-[128px] appearance-none bg-transparent [&::-webkit-slider-runnable-track]:h-1 [&::-webkit-slider-runnable-track]:bg-[#f3f3f3] [&::-webkit-slider-thumb]:-mt-2 [&::-webkit-slider-thumb]:h-5 [&::-webkit-slider-thumb]:w-2 [&::-webkit-slider-thumb]:appearance-none [&::-webkit-slider-thumb]:border [&::-webkit-slider-thumb]:border-[#777777] [&::-webkit-slider-thumb]:bg-[#f3f3f3]"
		/>
	</div>
);

const legOutline =
	"M26.5 18V14.5L29.5 11.5H34.5L36.5 14.5V65.5L38.5 69L43.5 71.5L88.5 78.5L91.5 81.5V91.5L88.5 94L23.5 102.5L16.5 108.5V179.5H17.5V254.5L21.5 257.5L90.5 272.5L92.5 275.5V281L90 283L11.5 265.5L7.5 261.5V239.5H10.5V221.5H7.5V189.5H10.5V170.5H7.5V154.5H6.5V138.5H10.5V119.5H6.5V98.5L10.5 94.5L48.5 88.5L52.5 86V82.5L48.5 80.5L30.5 78L26.5 74V66.5H29.5V49.5H26.5V35.5H29.5V18z";

const slats = [
	{ x: 28.5, top: 129.5, bottom: 237.5, width: 8 },
	{ x: 41.5, top: 129.5, bottom: 238.5, width: 9 },
	{ x: 57.5, top: 128.5, bottom: 237.5, width: 8 },
	{ x: 71.5, top: 128.5, bottom: 236.5, width: 8 },
];

const joints = [
	[35, 95],
	[71, 89],
	[129, 93],
	[166, 88],
	[36, 265],
	[73, 273],
	[130, 263],
	[167, 272],
];

const Artwork = () => (
	<svg className="h-[308px] w-[206px] shrink-0" viewBox="0 0 206 308" fill="none" stroke="#000" shapeRendering="crispEdges" role="img" aria-label="Laptop stand vectors">
		<rect x=".5" y=".5" width="205" height="307" fill="#fff" />
		<path d={legOutline} />
		<path d={legOutline} transform="translate(95 -1)" />
		{slats.map(({ x, top, bottom, width }) => (
			<path key={x} d={`M${x} ${top + 3}h2v-3h${width - 4}v3h2V${bottom - 3}h-2v3h-${width - 4}v-3h-2z`} />
		))}
		<path d="M124.5 121.5h6v-3h17v3h13v-3h17v3h5v102h-5v3h-17v-3h-13v3h-17v-3h-6z" />
		{joints.map(([x, y]) => (
			<path key={`${x}-${y}`} d="M-2 -1.5h5M-2 2.5h5M-1.5 -2v5M2.5 -2v5M-3 -2.5h2M2 -2.5h2M-3 3.5h2M2 3.5h2" transform={`translate(${x} ${y})`} />
		))}
	</svg>
);

const Palette = () => (
	<div className="flex h-[49px] shrink-0 gap-[5px] pl-[5px] pt-[9px]">
		<div className="relative mr-[5px] h-8 w-10">
			<button type="button" aria-label="Secondary colour" className="absolute bottom-0 right-0 h-5 w-[25px] border border-[#5e5e5e] bg-white" />
			<button type="button" aria-label="Primary colour" className="absolute left-0 top-0 h-5 w-[25px] border border-[#5e5e5e] bg-black" />
			<svg className="absolute inset-0 h-8 w-10" viewBox="0 0 40 32" fill="none" stroke="#fff" aria-hidden="true">
				<rect x="28.5" y="1.5" width="7" height="5" rx="2" />
				<rect x="32.5" y="4.5" width="7" height="5" rx="2" />
				<path d="M3.5 24v5.5H12M1.5 26l2-2 2 2M10.5 27.5l2 2-2 2" />
			</svg>
		</div>
		{swatches.map(({ name, color }) => (
			<button key={name} type="button" aria-label={name} className={`mt-px size-[30px] border border-[#5e5e5e] ${color}`} />
		))}
	</div>
);

const PanelButton = ({ label, children }: { label: string; children: ReactNode }) => (
	<button type="button" aria-label={label} className="flex w-5 items-center justify-center">
		<svg className="size-2.5" viewBox="0 0 10 10" fill="none" stroke="#fff" aria-hidden="true">
			{children}
		</svg>
	</button>
);

const ProjectPanel = () => (
	<section className="h-[287px] shrink-0 overflow-hidden">
		<div className="flex h-[18px] items-center bg-[#32588c] pl-1">
			<h2>Project</h2>
			<div className="-mr-[9px] ml-auto flex">
				<button type="button" aria-label="Help" className="w-5 text-[13px] font-bold leading-[18px]">
					?
				</button>
				<PanelButton label="Pin panel">
					<path d="M1.5 1v5M5 1v5M6 1v5M1 1.5h6M-1 6.5h10M4 7v3" />
				</PanelButton>
			</div>
		</div>
		<div className="mt-0.5 flex h-5 items-center pl-[7px]">
			<PageIcon />
			<span className="ml-[7px] flex-1 bg-[#5b5b5b] leading-5">laptop stand</span>
		</div>
		<ul>
			{treeRows.map(({ label, icon, open, add, grid, current }) => (
				<li key={label} className="flex h-5 items-center pl-[15px]">
					<span className="w-[13px]">
						{open && (
							<svg className="h-[9px] w-[6px]" viewBox="0 0 6 9" fill="none" stroke="#eee" aria-hidden="true">
								<path d="M.5 .8L5 4.5L.5 8.2z" />
							</svg>
						)}
					</span>
					<svg className="size-4" viewBox="0 0 16 16" aria-hidden="true">
						{icon}
					</svg>
					<span className={current ? "ml-[5px] font-bold text-[#fbe83a]" : "ml-[5px]"}>{label}</span>
					<div className="ml-auto flex">
						{add && (
							<button type="button" aria-label={`Add to ${label}`} className="flex w-[22px] items-center justify-center">
								<svg className="size-3.5" viewBox="0 0 14 14" stroke="#eee" strokeWidth="2" aria-hidden="true">
									<path d="M7 0v14M0 7h14" />
								</svg>
							</button>
						)}
						{grid && (
							<button type="button" aria-label={`Combine ${label}`} className="flex w-[22px] items-center justify-center">
								<svg className="size-4" viewBox="0 0 16 16" stroke="#ddd" aria-hidden="true">
									<path d="M3.5 0v7M0 3.5h7M12.5 0v7M9 3.5h7M3.5 9v7M0 12.5h7M12.5 9v7M9 12.5h7" />
								</svg>
							</button>
						)}
					</div>
				</li>
			))}
		</ul>
	</section>
);

const ModelPanel = () => (
	<section className="overflow-hidden">
		<div className="flex h-[22px] items-center bg-[#32588c] pl-[7px]">
			<PageIcon />
			<h2 className="ml-[7px]">Model</h2>
			<div className="-mr-[9px] ml-auto flex">
				<PanelButton label="Home">
					<path d="M5 0l5 5H8.5v5h-7V5H0z" fill="#fff" stroke="none" />
				</PanelButton>
				<PanelButton label="Collapse">
					<path d="M0 2h10L5 7zM0 7.5h10v1.5H0z" fill="#fff" stroke="none" />
				</PanelButton>
			</div>
		</div>
		<h3 className="mt-[5px] bg-[#32588c] pl-[3px] font-['DejaVu_Sans_Condensed',sans-serif] text-sm leading-[17px]">Model Information</h3>
		<div className="grid grid-cols-[112px_1fr] pl-[15px] pt-[13px] text-[11px] leading-[15px] text-[#dcdcdc]">
			<div>
				<h4 className="font-bold">Artwork</h4>
				<p>X: 600 mm</p>
				<p>Y: 900 mm</p>
				<p>1632 x 2448 pixels</p>
			</div>
			<div>
				<h4 className="font-bold">Relief</h4>
				<p>Max. Z: 0 mm</p>
				<p>Min. Z: 0 mm</p>
			</div>
		</div>
	</section>
);

const StatusBar = () => (
	<footer className="flex h-[13px] shrink-0 justify-end text-[11px] leading-[13px]">
		<span className="w-[76px]">X: -931.985</span>
		<span className="w-[76px]">Y: 265.074</span>
		<span className="w-[76px]">Z: 0.000</span>
		<span className="w-[76px] text-[#666666]">W:</span>
		<span className="w-[49px] text-[#666666]">H:</span>
	</footer>
);

const App = () => {
	return (
		<div className="flex h-screen flex-col overflow-hidden bg-[#333333] font-['Open_Sans',sans-serif] text-xs text-[#f1f1f1]">
			<TitleBar />
			<MenuBar />
			<ToolBars />
			<div className="flex min-h-0 flex-1">
				<SideBar />
				<main className="flex min-w-0 flex-1 flex-col">
					<Tabs />
					<ViewBar />
					<div className="flex min-h-0 flex-1 items-center justify-center overflow-hidden bg-[radial-gradient(ellipse_farthest-corner,#cbdff3_0%,#bccbda_18%,#a6b4be_34%,#929aa5_48%,#868b92_62%,#797d80_75%,#5a5a5a_100%)] pr-[30px] pt-[9px]">
						<Artwork />
					</div>
					<Palette />
				</main>
				<div className="ml-1 flex w-[257px] shrink-0 flex-col text-[11px]">
					<ProjectPanel />
					<ModelPanel />
				</div>
			</div>
			<StatusBar />
		</div>
	);
};

export default App;
